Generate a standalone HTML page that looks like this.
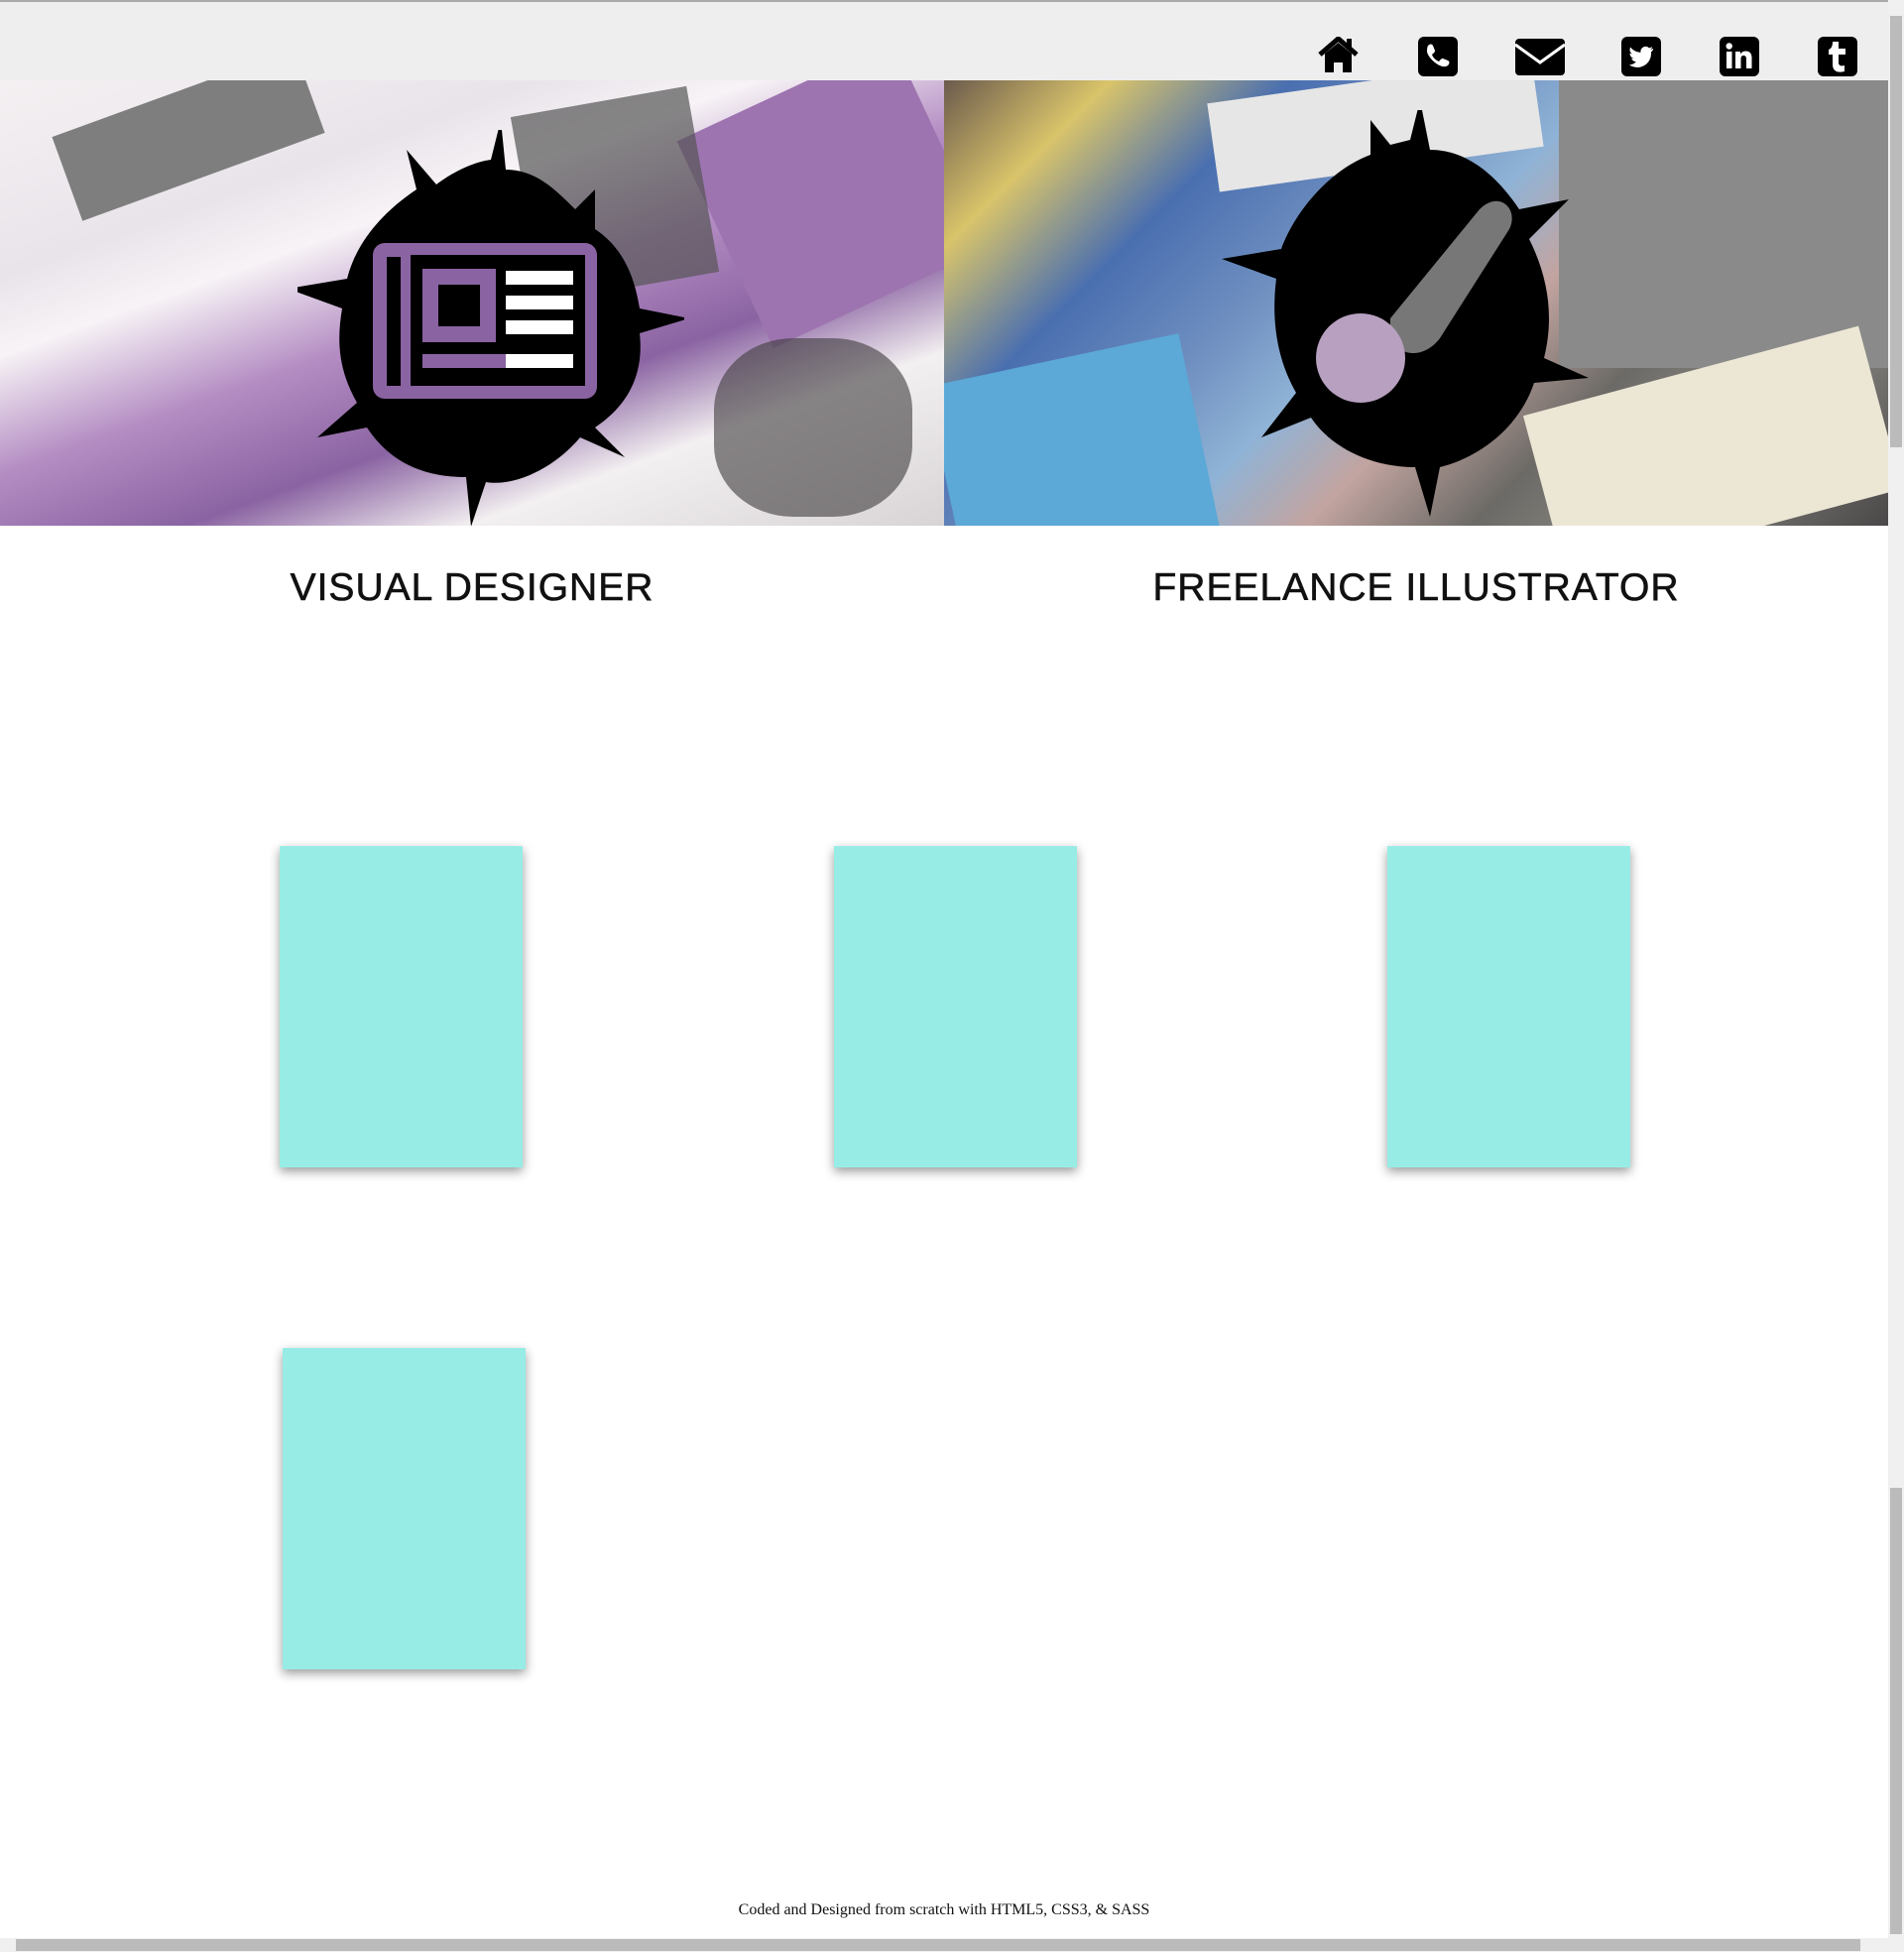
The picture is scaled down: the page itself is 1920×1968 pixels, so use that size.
<!DOCTYPE html>
<html><head><meta charset="utf-8"><style>
*{margin:0;padding:0;box-sizing:border-box}
body{width:1920px;height:1968px;background:#fff;position:relative;overflow:hidden;font-family:"Liberation Sans",sans-serif}
.hdr{position:absolute;left:0;top:0;width:1904px;height:81px;background:#eeeeee;border-top:2px solid #aaa}
.ic{position:absolute;top:35px}
.hero{position:absolute;top:81px;height:449px;overflow:hidden}
.t{position:absolute;top:571px;font-size:39px;letter-spacing:1px;color:#111;text-align:center;width:952px;-webkit-text-stroke:0.6px #111}
.card{position:absolute;width:245px;height:324px;background:#97ede6;box-shadow:0 4px 10px rgba(0,0,0,.4)}
.foot{position:absolute;top:1917px;width:1904px;text-align:center;font-family:"Liberation Serif",serif;font-size:16px;color:#111}
.sb{position:absolute;background:#bbb}
</style></head><body>
<div class="hdr">
<svg class="ic" style="left:1328px" width="43" height="36" viewBox="0 0 43 36"><path d="M3 18 L21.5 2 L40 18" fill="none" stroke="#000" stroke-width="5"/><path d="M8 17 L21.5 6 L35 17 V36 H26 V26 H17 V36 H8Z"/><rect x="30" y="2" width="5" height="9"/></svg>
<svg class="ic" style="left:1430px" width="40" height="40" viewBox="0 0 40 40"><rect width="40" height="40" rx="6"/><path d="M10 9c2-2 4-2 5 0l2 5c0 2-2 3-3 4 1 3 4 6 7 7 1-1 2-3 4-3l5 2c2 1 2 3 0 5-6 5-20-7-21-14 0-2 0-4 1-6z" fill="#fff"/></svg>
<svg class="ic" style="left:1528px;top:37px" width="50" height="37" viewBox="0 0 50 37"><rect width="50" height="37" rx="4"/><path d="M0 6 L25 24 L50 6" fill="none" stroke="#fff" stroke-width="3"/></svg>
<svg class="ic" style="left:1635px" width="40" height="40" viewBox="0 0 40 40"><rect width="40" height="40" rx="6"/><path d="M32 12c-1 .5-2 .8-3 .9 1-.7 2-1.6 2.3-2.8-1 .6-2 1-3.3 1.3a5 5 0 0 0-8.5 4.5c-4-.2-7.8-2.2-10.3-5.3-1.4 2.3-.6 5.2 1.600 6.7-.8 0-1.6-.3-2.3-.6 0 2.4 1.7 4.5 4 5-.7.2-1.5.2-2.3.1.7 2 2.6 3.4 4.7 3.5A10 10 0 0 1 8 28.4 14 14 0 0 0 30 16v-.6c1-.8 1.6-1.6 2-2.4z" fill="#fff"/></svg>
<svg class="ic" style="left:1734px" width="40" height="40" viewBox="0 0 40 40"><rect width="40" height="40" rx="6"/><rect x="7" y="15" width="5.5" height="17" fill="#fff"/><circle cx="9.7" cy="9.5" r="3.2" fill="#fff"/><path d="M16 15h5v2.5c1.2-2 3-3 5.5-3 4 0 6 2.5 6 7V32h-5.5v-9.5c0-2.5-1-3.5-2.8-3.5s-2.7 1.3-2.7 3.5V32H16z" fill="#fff"/></svg>
<svg class="ic" style="left:1833px" width="40" height="40" viewBox="0 0 40 40"><rect width="40" height="40" rx="6"/><path d="M15 5h6v7h7v6h-7v8c0 3 2 4 6 3v6c-8 2-12-1-12-7v-10h-4v-5c3-1 4-4 4-8z" fill="#fff"/></svg>
</div>
<div class="hero" style="left:0;width:952px;background:linear-gradient(160deg,#f4f0f2 0%,#e9e4ea 25%,#f7f3f6 35%,#b48dc3 50%,#8a63a2 65%,#f3f0f1 78%,#d8d4d6 100%)">
<div style="position:absolute;left:60px;top:10px;width:260px;height:90px;background:#7e7e7e;transform:rotate(-20deg)"></div>
<div style="position:absolute;left:720px;top:0;width:240px;height:230px;background:#9d74b0;transform:rotate(-25deg)"></div>
<div style="position:absolute;left:530px;top:20px;width:180px;height:190px;background:#555;transform:rotate(-10deg);opacity:.7"></div>
<div style="position:absolute;left:720px;top:260px;width:200px;height:180px;background:#3e3a3c;opacity:.6;border-radius:40%"></div>
<svg style="position:absolute;left:300px;top:50px" width="390" height="410" viewBox="0 0 390 410"><path d="M195 30 L205 -10 L210 40 C240 40 260 60 280 80 L300 60 L300 100 C330 120 340 150 345 180 L395 190 L345 205 C350 250 330 280 300 300 L330 330 L285 310 C260 340 220 360 190 355 L175 400 L170 350 C120 350 90 330 70 300 L20 310 L60 275 C40 240 40 210 45 180 L-10 160 L50 150 C60 110 90 80 120 60 L110 20 L140 55 C160 40 180 32 195 30Z"/>
<rect x="76" y="114" width="226" height="157" rx="12" fill="#8a63a2"/>
<rect x="114" y="126" width="176" height="132" fill="#000"/>
<rect x="90" y="128" width="14" height="130" fill="#000"/>
<rect x="126" y="140" width="74" height="74" fill="#8a63a2"/><rect x="142" y="156" width="42" height="42" fill="#000"/>
<rect x="210" y="142" width="68" height="14" fill="#fff"/><rect x="210" y="167" width="68" height="14" fill="#fff"/><rect x="210" y="192" width="68" height="14" fill="#fff"/>
<rect x="126" y="226" width="152" height="14" fill="#8a63a2"/><rect x="210" y="226" width="68" height="14" fill="#fff"/></svg>
</div>
<div class="hero" style="left:952px;width:952px;background:linear-gradient(135deg,#6b5a4d 0%,#d9c46a 12%,#4a6fb0 25%,#6f8fc0 38%,#8fb3d6 48%,#c2a4a0 58%,#6c6a66 70%,#8c8a84 82%,#4a4848 100%)">
<div style="position:absolute;left:0;top:280px;width:260px;height:200px;background:#5ca8d6;transform:rotate(-12deg)"></div>
<div style="position:absolute;left:620px;top:0;width:340px;height:290px;background:#8a8a8a"></div>
<div style="position:absolute;left:600px;top:290px;width:350px;height:170px;background:#ece6d5;transform:rotate(-15deg)"></div>
<div style="position:absolute;left:270px;top:0;width:330px;height:90px;background:#e6e6e6;transform:rotate(-8deg)"></div>
<svg style="position:absolute;left:280px;top:30px" width="380" height="420" viewBox="0 0 380 420"><path d="M190 30 L200 -10 L210 40 C250 40 280 70 300 100 L350 90 L310 130 C330 170 335 210 325 250 L370 270 L315 275 C300 320 260 350 220 360 L210 410 L195 360 C150 360 110 340 90 310 L40 330 L75 285 C55 250 50 210 55 170 L0 150 L60 140 C75 100 110 60 150 45 L150 10 L170 35Z"/><path d="M170 210 L260 100 C280 80 300 100 290 120 L220 230 C205 250 180 250 170 230Z" fill="#777"/><circle cx="140" cy="250" r="45" fill="#b8a0c0"/></svg>
</div>
<div class="t" style="left:0">VISUAL DESIGNER</div>
<div class="t" style="left:952px">FREELANCE ILLUSTRATOR</div>
<div class="card" style="left:282px;top:853px"></div>
<div class="card" style="left:841px;top:853px"></div>
<div class="card" style="left:1399px;top:853px"></div>
<div class="card" style="left:285px;top:1359px"></div>
<div class="foot">Coded and Designed from scratch with HTML5, CSS3, &amp; SASS</div>
<div style="position:absolute;left:1904px;top:0;width:16px;height:1968px;background:#f0f0f0"></div>
<div class="sb" style="left:1906px;top:16px;width:12px;height:435px"></div>
<div class="sb" style="left:1906px;top:1500px;width:12px;height:450px"></div>
<div style="position:absolute;left:0;top:1954px;width:1920px;height:14px;background:#f0f0f0"></div>
<div class="sb" style="left:16px;top:1955px;width:1860px;height:12px"></div>
</body></html>
